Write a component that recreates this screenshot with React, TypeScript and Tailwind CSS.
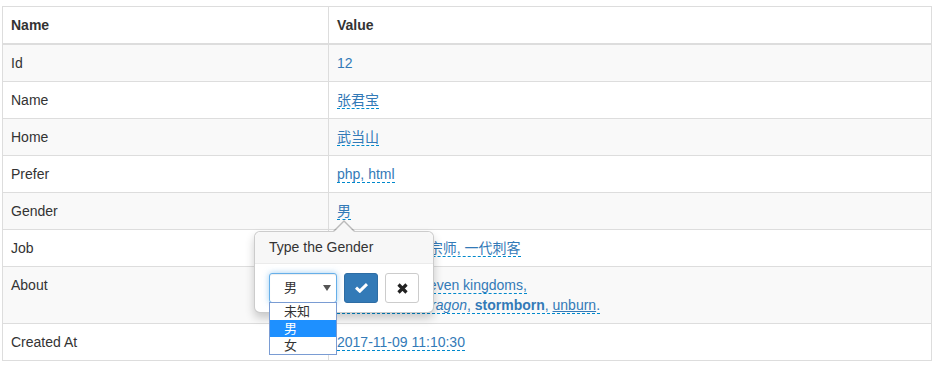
import type { ReactNode } from "react";

const link = "text-[#337ab7] border-b border-dashed border-[#0088cc]";

function Editable({ children }: { children: ReactNode }) {
  return <a className={link}>{children}</a>;
}

const rows: { name: string; value: ReactNode }[] = [
  { name: "Id", value: <span className="text-[#337ab7]">12</span> },
  { name: "Name", value: <Editable>张君宝</Editable> },
  { name: "Home", value: <Editable>武当山</Editable> },
  { name: "Prefer", value: <Editable>php, html</Editable> },
  { name: "Gender", value: <Editable>男</Editable> },
  { name: "Job", value: <Editable>武当掌门, 一代宗师, 一代刺客</Editable> },
  {
    name: "About",
    value: (
      <Editable>
        Queen of the seven kingdoms,
        <br />
        <i>the mother of dragon</i>, <b>stormborn</b>, <u>unburn</u>.
      </Editable>
    ),
  },
  { name: "Created At", value: <Editable>2017-11-09 11:10:30</Editable> },
];

function GenderPopover() {
  return (
    <div className="absolute left-[254px] top-[231px] w-[180px] rounded-md border border-black/20 bg-white shadow-[0_5px_10px_rgba(0,0,0,0.2)]">
      <div className="absolute left-1/2 -top-[12px] h-0 w-0 -translate-x-1/2 border-x-[11px] border-b-[11px] border-x-transparent border-b-black/25" />
      <div className="absolute left-1/2 -top-[10px] h-0 w-0 -translate-x-1/2 border-x-[10px] border-b-[10px] border-x-transparent border-b-[#f7f7f7]" />

      <div className="rounded-t-md border-b border-[#ebebeb] bg-[#f7f7f7] px-[14px] pt-[8px] pb-[8px] text-[14px] leading-[15px] text-[#333]">
        Type the Gender
      </div>

      <div className="flex items-start gap-[7px] px-[14px] py-[9px]">
        <div className="relative">
          <div className="flex h-[30px] w-[68px] items-center justify-between rounded-[3px] border border-[#66afe9] bg-white pl-[14px] pr-[5px] text-[13px] text-[#333] shadow-[inset_0_1px_1px_rgba(0,0,0,0.075),0_0_6px_rgba(102,175,233,0.6)]">
            <span>男</span>
            <svg width="8" height="6" viewBox="0 0 8 6">
              <path d="M0 0 H8 L4 6 Z" fill="#555" />
            </svg>
          </div>
          <ul className="absolute left-0 top-[29px] z-10 w-[68px] border border-[#7a9cd3] bg-white text-[13px] leading-[17px] text-[#333]">
            <li className="pl-[14px]">未知</li>
            <li className="bg-[#1e90ff] pl-[14px] text-white">男</li>
            <li className="pl-[14px]">女</li>
          </ul>
        </div>

        <button className="flex h-[30px] w-[34px] items-center justify-center rounded-[3px] border border-[#2e6da4] bg-[#337ab7]">
          <svg width="13" height="10" viewBox="0 0 13 10">
            <polyline points="1,4.6 4.8,8.2 12,1.2" fill="none" stroke="#fff" strokeWidth="3" strokeLinejoin="miter" />
          </svg>
        </button>

        <button className="flex h-[30px] w-[34px] items-center justify-center rounded-[3px] border border-[#ccc] bg-white">
          <svg width="11" height="11" viewBox="0 0 11 11">
            <path d="M1.5 1.5 L9.5 9.5 M9.5 1.5 L1.5 9.5" stroke="#222" strokeWidth="3.2" />
          </svg>
        </button>
      </div>
    </div>
  );
}

export default function App() {
  return (
    <div className="relative min-h-[365px] bg-white pl-[2px] pt-[6px] font-['Liberation_Sans','Noto_Sans_CJK_SC',sans-serif] text-[14px] text-[#333]">
      <table className="w-[930px] table-fixed border-collapse border border-[#ddd]">
        <thead>
          <tr>
            <th className="w-[326px] border border-b-2 border-[#ddd] p-2 text-left font-bold leading-5">Name</th>
            <th className="border border-b-2 border-[#ddd] p-2 text-left font-bold leading-5">Value</th>
          </tr>
        </thead>
        <tbody>
          {rows.map((r, i) => (
            <tr key={r.name} className={i % 2 === 0 ? "bg-[#f9f9f9]" : "bg-white"}>
              <td className="border border-[#ddd] p-2 align-top leading-5">{r.name}</td>
              <td className="border border-[#ddd] p-2 align-top leading-5">{r.value}</td>
            </tr>
          ))}
        </tbody>
      </table>

      <GenderPopover />
    </div>
  );
}
